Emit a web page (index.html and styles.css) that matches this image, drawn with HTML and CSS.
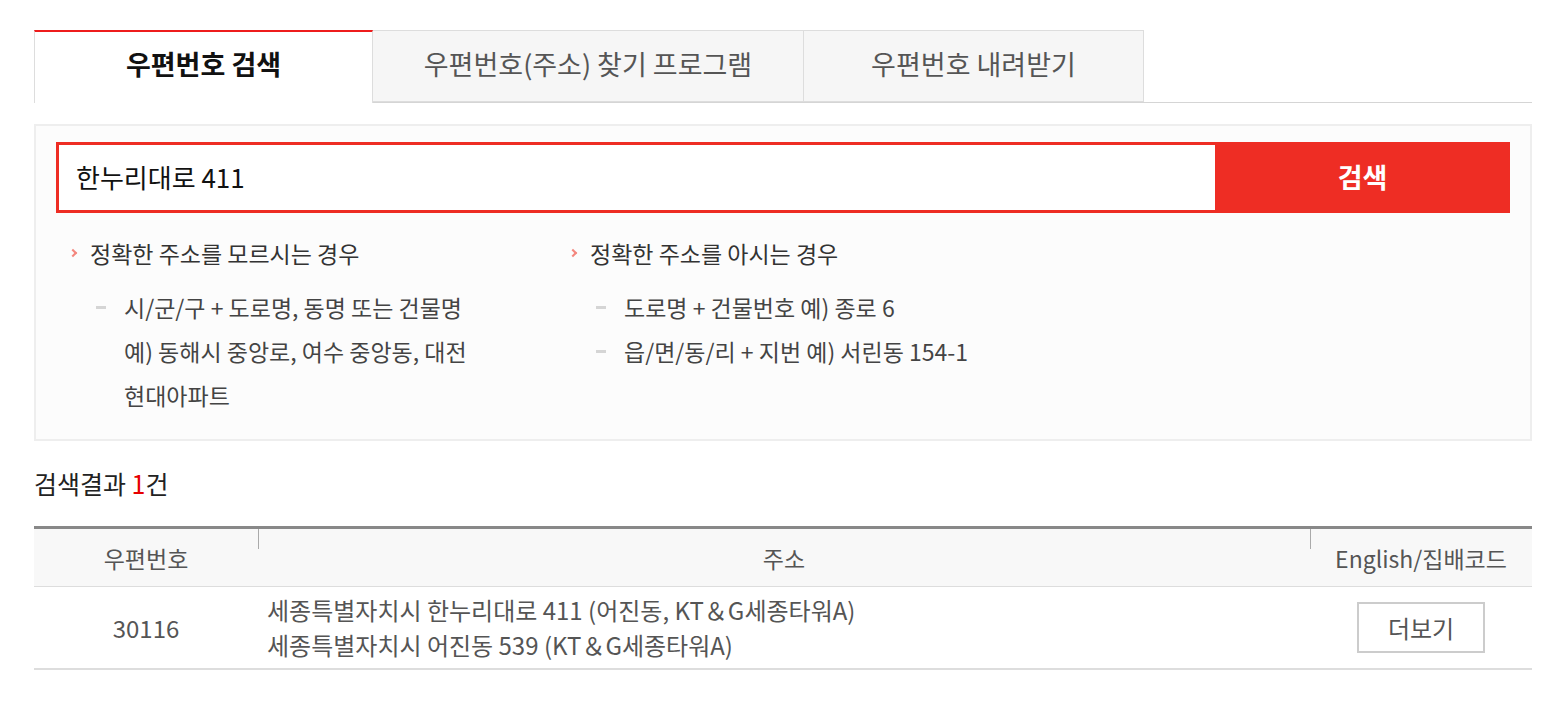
FILE: index.html
```html
<html>
<head>
<meta charset="utf-8">
<link rel="stylesheet" href="styles.css">
</head>
<body>
<div class="wrap">
	<ul class="tabs">
		<li class="tab on">우편번호 검색</li>
		<li class="tab">우편번호(주소) 찾기 프로그램</li>
		<li class="tab">우편번호 내려받기</li>
	</ul>

	<div class="search_box">
		<div class="search_row">
			<div class="search_input">한누리대로 411</div>
			<div class="search_btn">검색</div>
		</div>
		<div class="guide">
			<div class="guide_col">
				<p class="guide_title">정확한 주소를 모르시는 경우</p>
				<ul class="guide_list">
					<li>시/군/구 + 도로명, 동명 또는 건물명<br/>예) 동해시 중앙로, 여수 중앙동, 대전<br/>현대아파트</li>
				</ul>
			</div>
			<div class="guide_col">
				<p class="guide_title">정확한 주소를 아시는 경우</p>
				<ul class="guide_list">
					<li>도로명 + 건물번호 예) 종로 6</li>
					<li>읍/면/동/리 + 지번 예) 서린동 154-1</li>
				</ul>
			</div>
		</div>
	</div>

	<p class="result_count">검색결과 <em>1</em>건</p>

	<table class="result_table">
		<thead>
			<tr>
				<th class="col_zip">우편번호</th>
				<th class="col_addr">주소</th>
				<th class="col_more">English/집배코드</th>
			</tr>
		</thead>
		<tbody>
			<tr>
				<td class="col_zip">30116</td>
				<td class="col_addr">세종특별자치시 한누리대로 411 (어진동, KT＆G세종타워A)<br/>세종특별자치시 어진동 539 (KT＆G세종타워A)</td>
				<td class="col_more"><span class="more_btn">더보기</span></td>
			</tr>
		</tbody>
	</table>
</div>
</body>
</html>
```

FILE: styles.css
```css
body {
	margin: 0;
	background: #fff;
	font-family: "Noto Sans CJK KR", "Noto Sans", sans-serif;
	color: #333;
}
.wrap {
	width: 1498px;
	padding: 30px 0 0 34px;
}
.tabs {
	display: flex;
	margin: 0;
	padding: 0;
	list-style: none;
	border-bottom: 1px solid #d5d5d5;
	height: 72px;
}
.tab {
	height: 70px;
	border: 1px solid #ddd;
	border-left: 0;
	background: #f6f6f6;
	color: #555;
	font-size: 27px;
	line-height: 66px;
	text-align: center;
}
.tab:nth-child(1) { width: 337px; }
.tab:nth-child(2) { width: 430px; }
.tab:nth-child(3) { width: 339px; }
.tab.on {
	height: 71px;
	border-top: 2px solid #ee1c1c;
	border-left: 1px solid #ddd;
	border-bottom: 0;
	background: #fff;
	color: #111;
	font-weight: bold;
	line-height: 64px;
}
.search_box {
	margin-top: 21px;
	border: 2px solid #eee;
	background: #fcfcfc;
	padding: 16px 20px 0 20px;
	height: 297px;
}
.search_row {
	display: flex;
	height: 71px;
}
.search_input {
	flex: 1;
	border: 3px solid #ee2d24;
	border-right: 0;
	background: #fff;
	font-size: 26px;
	color: #111;
	line-height: 63px;
	padding-left: 17px;
}
.search_btn {
	width: 295px;
	background: #ee2d24;
	color: #fff;
	font-size: 27px;
	font-weight: bold;
	line-height: 69px;
	text-align: center;
}
.guide {
	display: flex;
	padding: 20px 0 0 14px;
}
.guide_col {
	width: 500px;
}
.guide_title {
	margin: 0;
	padding-left: 20px;
	position: relative;
	font-size: 23px;
	line-height: 40px;
	color: #333;
}
.guide_title:before {
	content: "";
	position: absolute;
	left: 0;
	top: 17px;
	width: 4px;
	height: 4px;
	border-top: 2px solid #f4877e;
	border-right: 2px solid #f4877e;
	transform: rotate(45deg);
}
.guide_list {
	margin: 12px 0 0 0;
	padding: 0 0 0 54px;
	list-style: none;
}
.guide_list li {
	position: relative;
	font-size: 23px;
	line-height: 44px;
	color: #444;
}
.guide_list li:before {
	content: "";
	position: absolute;
	left: -28px;
	top: 21px;
	width: 10px;
	height: 3px;
	background: #d5d5d5;
}
.result_count {
	margin: 26px 0 0 0;
	font-size: 25px;
	line-height: 32px;
	color: #222;
}
.result_count em {
	font-style: normal;
	color: #e60000;
}
.result_table {
	margin-top: 27px;
	width: 1498px;
	border-collapse: collapse;
	border-top: 3px solid #888;
}
.result_table th {
	position: relative;
	height: 59px;
	background: #f8f8f8;
	border-bottom: 1px solid #ddd;
	font-size: 23px;
	font-weight: normal;
	color: #555;
	padding: 0;
}
.result_table th + th:before {
	content: "";
	position: absolute;
	left: 0;
	top: 0;
	width: 1px;
	height: 20px;
	background: #aaa;
}
.result_table td {
	height: 82px;
	border-bottom: 2px solid #ddd;
	font-size: 24px;
	color: #555;
	padding: 0;
}
.col_zip { width: 224px; text-align: center; }
.col_more { width: 222px; text-align: center; }
th.col_addr { text-align: center; }
td.col_addr {
	text-align: left;
	padding-left: 9px;
	line-height: 35px;
}
.more_btn {
	display: inline-block;
	width: 124px;
	height: 47px;
	line-height: 47px;
	border: 2px solid #ccc;
	background: #fff;
	color: #555;
}
```
